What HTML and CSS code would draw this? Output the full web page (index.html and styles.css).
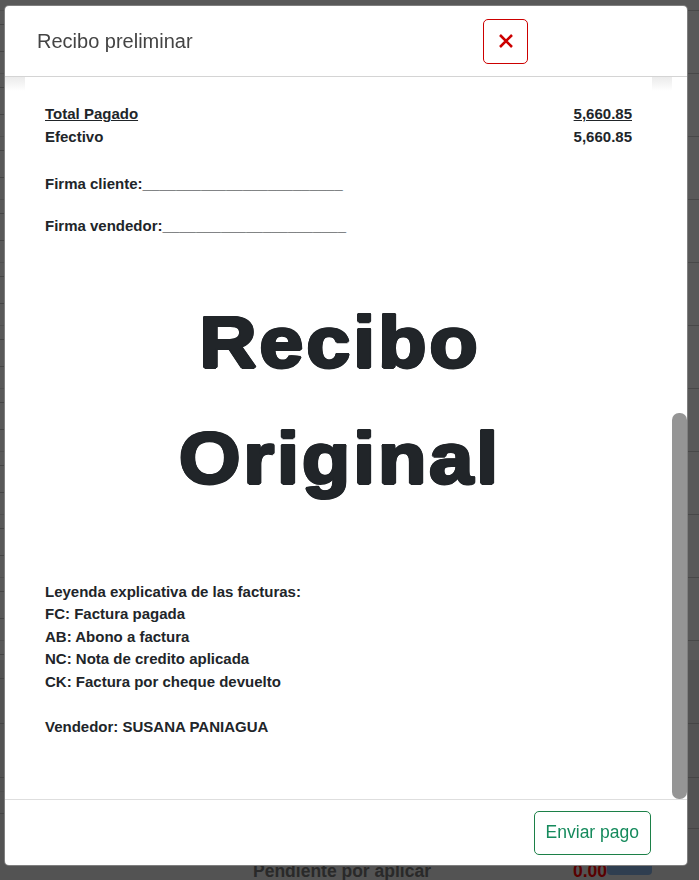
FILE: index.html
```html
<!DOCTYPE html>
<html lang="es">
<head>
<meta charset="utf-8">
<title>Recibo preliminar</title>
<link rel="stylesheet" href="styles.css">
</head>
<body>
<div class="page">
  <div class="bg-grid">
    <div class="bg-col bg-left"></div>
    <div class="bg-col bg-right"></div>
  </div>
  <div class="bg-lower">
    <div class="bg-total">
      <span class="bg-label">Pendiente por aplicar</span>
      <span class="bg-value">0.00</span>
      <span class="bg-btn"></span>
    </div>
  </div>
</div>

<div class="backdrop"></div>

<div class="modal" role="dialog" aria-label="Recibo preliminar">
  <div class="modal-header">
    <h5 class="modal-title">Recibo preliminar</h5>
    <button class="btn-close-x" type="button" aria-label="Cerrar">
      <svg width="14" height="14" viewBox="0 0 14 14" aria-hidden="true"><path d="M1 1L13 13M13 1L1 13" stroke="#cc0000" stroke-width="2.6" fill="none"/></svg>
    </button>
  </div>
  <div class="modal-main">
    <div class="modal-body">
      <div class="receipt">
        <div class="row"><span class="u">Total Pagado</span><span class="u">5,660.85</span></div>
        <div class="row"><span>Efectivo</span><span>5,660.85</span></div>
        <p class="firma firma-cliente">Firma cliente:________________________</p>
        <p class="firma firma-vendedor">Firma vendedor:______________________</p>
        <div class="stamp">Recibo<br>Original</div>
        <div class="legend">
          <div>Leyenda explicativa de las facturas:</div>
          <div>FC: Factura pagada</div>
          <div>AB: Abono a factura</div>
          <div>NC: Nota de credito aplicada</div>
          <div>CK: Factura por cheque devuelto</div>
        </div>
        <p class="vendedor">Vendedor: SUSANA PANIAGUA</p>
      </div>
    </div>
    <div class="scroll-track" aria-hidden="true">
      <div class="scroll-thumb"></div>
    </div>
  </div>
  <div class="modal-footer">
    <button class="btn-enviar" type="button">Enviar pago</button>
  </div>
</div>
</body>
</html>
```
FILE: styles.css
```css
* { box-sizing: border-box; }

html, body {
  margin: 0;
  height: 100%;
}

body {
  font-family: "Liberation Sans", Arial, sans-serif;
  background: #fff;
  overflow: hidden;
}

/* ---------- background page ---------- */
.page {
  height: 880px;
  overflow: hidden;
  display: flex;
  flex-direction: column;
}

.bg-grid {
  flex: none;
  height: 660px;
  display: flex;
}

.bg-col { flex: 1; }

.bg-left {
  background-image: repeating-linear-gradient(to bottom,
    transparent 0 10px, #e6e6e6 10px 11px,
    transparent 11px 24px, #c6c6c6 24px 25px,
    transparent 25px 51px, #c6c6c6 51px 52px,
    transparent 52px 63px);
}

.bg-right {
  background-image: repeating-linear-gradient(to bottom,
    transparent 0 10px, #cdcdcd 10px 11px,
    transparent 11px 63px);
}

.bg-lower {
  flex: 1;
  padding-top: 185px;
  background:
    linear-gradient(#c6c6c6, #c6c6c6) 0 18px / 50% 1px no-repeat,
    linear-gradient(#c6c6c6, #c6c6c6) 0 63px / 100% 1px no-repeat,
    linear-gradient(#c6c6c6, #c6c6c6) 0 117px / 100% 1px no-repeat,
    linear-gradient(#e0e0e0, #e0e0e0) 0 131px / 50% 1px no-repeat,
    linear-gradient(#c6c6c6, #c6c6c6) 0 153px / 50% 1px no-repeat,
    linear-gradient(#c6c6c6, #c6c6c6) 100% 168px / 50% 1px no-repeat,
    #ededed;
}

.bg-total {
  display: flex;
  align-items: flex-start;
}

.bg-label,
.bg-value {
  margin-top: 16px;
  font-size: 17.5px;
  line-height: 21px;
  font-weight: 700;
}

.bg-label {
  margin-left: 253px;
  color: #777;
}

.bg-value {
  margin-left: auto;
  color: #f00;
}

.bg-btn {
  width: 45px;
  height: 30px;
  margin-right: 47px;
  background: #86b1e5;
  border-radius: 4px;
}

/* ---------- modal ---------- */
.backdrop {
  position: fixed;
  inset: 0;
  background: rgba(0, 0, 0, 0.65);
}

.modal {
  position: fixed;
  left: 4px;
  top: 5px;
  width: 684px;
  height: 861px;
  background: #fff;
  border: 1px solid rgba(0, 0, 0, 0.5);
  border-radius: 5px;
  display: flex;
  flex-direction: column;
  overflow: hidden;
}

.modal-header {
  flex: none;
  height: 71px;
  border-bottom: 1px solid #d4d4d4;
  display: flex;
  align-items: center;
  padding-left: 32px;
}

.modal-title {
  margin: 0;
  font-size: 20px;
  font-weight: 400;
  color: #444;
}

.btn-close-x {
  margin-left: auto;
  margin-right: 159px;
  width: 45px;
  height: 45px;
  padding: 0;
  border: 1px solid #cc0000;
  border-radius: 5px;
  background: #fff;
  display: flex;
  align-items: center;
  justify-content: center;
}

.modal-main {
  flex: 1;
  min-height: 0;
  display: flex;
}

.modal-body {
  flex: 1;
  min-width: 0;
  overflow: hidden;
  padding: 0 20px;
  background: linear-gradient(#ebebeb, #fff 14px);
}

.scroll-track {
  flex: none;
  width: 15px;
  background: #fff;
  display: flex;
  flex-direction: column;
}

.scroll-thumb {
  margin-top: auto;
  height: 386px;
  background: #959595;
  border-radius: 7px;
}

.receipt {
  background: #fff;
  min-height: 100%;
  padding: 26px 20px 0;
  color: #212529;
  font-size: 15px;
  font-weight: 700;
  line-height: 22.5px;
}

.row {
  display: flex;
  justify-content: space-between;
}

.u { text-decoration: underline; }

.firma { margin: 0; }
.firma-cliente { margin-top: 25px; }
.firma-vendedor { margin-top: 19px; }

.stamp {
  margin-top: 47px;
  font-size: 72px;
  line-height: 116px;
  letter-spacing: 2.6px;
  padding-left: 2.6px;
  text-align: center;
  text-shadow:
    1.5px 0 0 #212529, -1.5px 0 0 #212529,
    0 1.5px 0 #212529, 0 -1.5px 0 #212529,
    1.1px 1.1px 0 #212529, -1.1px 1.1px 0 #212529,
    1.1px -1.1px 0 #212529, -1.1px -1.1px 0 #212529;
  transform: scaleX(1.1);
}

.legend { margin-top: 64.5px; }

.vendedor {
  margin: 22.5px 0 0;
}

.modal-footer {
  flex: none;
  height: 66px;
  border-top: 1px solid #dedede;
  display: flex;
  align-items: center;
  justify-content: flex-end;
  padding-right: 36px;
}

.btn-enviar {
  height: 44px;
  padding: 0 11px;
  border: 1px solid #1c8048;
  border-radius: 5px;
  background: #fff;
  color: #158a5c;
  font-family: "Liberation Sans", Arial, sans-serif;
  font-size: 17.5px;
}
```
